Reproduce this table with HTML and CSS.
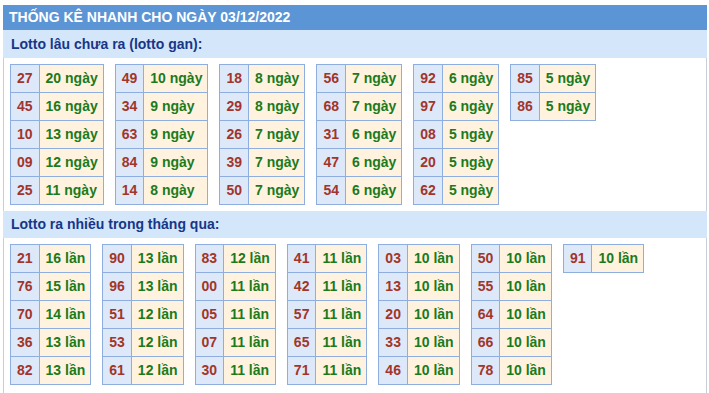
FILE: index.html
```html
<!DOCTYPE html>
<html lang="vi">
<head>
<meta charset="utf-8">
<link rel="stylesheet" href="styles.css">
</head>
<body>
<div class="box">
  <div class="title">THỐNG KÊ NHANH CHO NGÀY 03/12/2022</div>
  <div class="sub">Lotto lâu chưa ra (lotto gan):</div>
  <div class="tables">
    <table class="t"><tr><td class="n">27</td><td class="v">20 ngày</td></tr><tr><td class="n">45</td><td class="v">16 ngày</td></tr><tr><td class="n">10</td><td class="v">13 ngày</td></tr><tr><td class="n">09</td><td class="v">12 ngày</td></tr><tr><td class="n">25</td><td class="v">11 ngày</td></tr></table>
    <table class="t"><tr><td class="n">49</td><td class="v">10 ngày</td></tr><tr><td class="n">34</td><td class="v">9 ngày</td></tr><tr><td class="n">63</td><td class="v">9 ngày</td></tr><tr><td class="n">84</td><td class="v">9 ngày</td></tr><tr><td class="n">14</td><td class="v">8 ngày</td></tr></table>
    <table class="t"><tr><td class="n">18</td><td class="v">8 ngày</td></tr><tr><td class="n">29</td><td class="v">8 ngày</td></tr><tr><td class="n">26</td><td class="v">7 ngày</td></tr><tr><td class="n">39</td><td class="v">7 ngày</td></tr><tr><td class="n">50</td><td class="v">7 ngày</td></tr></table>
    <table class="t"><tr><td class="n">56</td><td class="v">7 ngày</td></tr><tr><td class="n">68</td><td class="v">7 ngày</td></tr><tr><td class="n">31</td><td class="v">6 ngày</td></tr><tr><td class="n">47</td><td class="v">6 ngày</td></tr><tr><td class="n">54</td><td class="v">6 ngày</td></tr></table>
    <table class="t"><tr><td class="n">92</td><td class="v">6 ngày</td></tr><tr><td class="n">97</td><td class="v">6 ngày</td></tr><tr><td class="n">08</td><td class="v">5 ngày</td></tr><tr><td class="n">20</td><td class="v">5 ngày</td></tr><tr><td class="n">62</td><td class="v">5 ngày</td></tr></table>
    <table class="t"><tr><td class="n">85</td><td class="v">5 ngày</td></tr><tr><td class="n">86</td><td class="v">5 ngày</td></tr></table>
  </div>
  <div class="sub">Lotto ra nhiều trong tháng qua:</div>
  <div class="tables">
    <table class="t"><tr><td class="n">21</td><td class="v">16 lần</td></tr><tr><td class="n">76</td><td class="v">15 lần</td></tr><tr><td class="n">70</td><td class="v">14 lần</td></tr><tr><td class="n">36</td><td class="v">13 lần</td></tr><tr><td class="n">82</td><td class="v">13 lần</td></tr></table>
    <table class="t"><tr><td class="n">90</td><td class="v">13 lần</td></tr><tr><td class="n">96</td><td class="v">13 lần</td></tr><tr><td class="n">51</td><td class="v">12 lần</td></tr><tr><td class="n">53</td><td class="v">12 lần</td></tr><tr><td class="n">61</td><td class="v">12 lần</td></tr></table>
    <table class="t"><tr><td class="n">83</td><td class="v">12 lần</td></tr><tr><td class="n">00</td><td class="v">11 lần</td></tr><tr><td class="n">05</td><td class="v">11 lần</td></tr><tr><td class="n">07</td><td class="v">11 lần</td></tr><tr><td class="n">30</td><td class="v">11 lần</td></tr></table>
    <table class="t"><tr><td class="n">41</td><td class="v">11 lần</td></tr><tr><td class="n">42</td><td class="v">11 lần</td></tr><tr><td class="n">57</td><td class="v">11 lần</td></tr><tr><td class="n">65</td><td class="v">11 lần</td></tr><tr><td class="n">71</td><td class="v">11 lần</td></tr></table>
    <table class="t"><tr><td class="n">03</td><td class="v">10 lần</td></tr><tr><td class="n">13</td><td class="v">10 lần</td></tr><tr><td class="n">20</td><td class="v">10 lần</td></tr><tr><td class="n">33</td><td class="v">10 lần</td></tr><tr><td class="n">46</td><td class="v">10 lần</td></tr></table>
    <table class="t"><tr><td class="n">50</td><td class="v">10 lần</td></tr><tr><td class="n">55</td><td class="v">10 lần</td></tr><tr><td class="n">64</td><td class="v">10 lần</td></tr><tr><td class="n">66</td><td class="v">10 lần</td></tr><tr><td class="n">78</td><td class="v">10 lần</td></tr></table>
    <table class="t"><tr><td class="n">91</td><td class="v">10 lần</td></tr></table>
  </div>
</div>
</body>
</html>
```
FILE: styles.css
```css
html, body {
  margin: 0;
  padding: 0;
  background: #ffffff;
}
body {
  padding: 5px 0 0 3px;
  font-family: "Liberation Sans", Arial, sans-serif;
  font-size: 14px;
  font-weight: bold;
}
.box {
  width: 702px;
  min-height: 388px;
  border-left: 1px solid #c9ced8;
  border-right: 1px solid #c9ced8;
}
.title {
  margin: 0 -1px;
  height: 25px;
  line-height: 25px;
  padding-left: 6px;
  background: #5b95d5;
  color: #ffffff;
}
.sub {
  margin: 0 -1px;
  height: 27px;
  line-height: 27px;
  padding-left: 8px;
  background: #d4e6fa;
  color: #173688;
}
.title + .sub {
  height: 28px;
  line-height: 28px;
}
.tables {
  display: flex;
  align-items: flex-start;
  gap: 11px;
  padding: 6px;
}
.t {
  border-collapse: collapse;
}
.t td {
  border: 1px solid #8eaee0;
  height: 27px;
  line-height: 27px;
  padding: 0 6px;
  white-space: nowrap;
}
.t td.v {
  padding: 0 5px 0 6px;
}
.n {
  background: #dde9f9;
  color: #a2352b;
  text-align: center;
}
.v {
  background: #fff3e0;
  color: #1c7a1c;
}
```
